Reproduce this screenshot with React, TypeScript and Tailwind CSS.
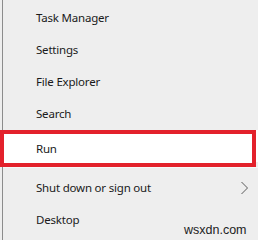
import React from "react";

const font = { fontFamily: '"Noto Sans", "Open Sans", sans-serif' };

function Row({ label, chevron }: { label: string; chevron?: boolean }) {
  return (
    <div className="h-[32px] flex items-center pl-[33px] pr-[8px] text-[11.5px] tracking-[-0.2px] text-[#1a1a1a]">
      <span className="flex-1">{label}</span>
      {chevron && (
        <svg width="9" height="14" viewBox="0 0 9 14" className="mr-[1px]">
          <polyline points="1.5,1 7.5,7 1.5,13" fill="none" stroke="#5a5a5a" strokeWidth="1" />
        </svg>
      )}
    </div>
  );
}

export default function App() {
  return (
    <div className="relative w-[258px] h-[240px] bg-[#eeeeee] overflow-hidden flex" style={font}>
      <div className="w-[2px] shrink-0" />
      <div className="w-[1px] shrink-0 bg-[#8c8c8c]" />
      <div className="flex-1 flex flex-col pt-[2px]">
        <Row label="Task Manager" />
        <Row label="Settings" />
        <Row label="File Explorer" />
        <Row label="Search" />
        <div className="h-[32px] bg-white" />
        <div className="h-[10px] flex flex-col">
          <div className="h-[5px]" />
          <div className="h-[1px] bg-[#f8f8f8]" />
        </div>
        <Row label="Shut down or sign out" chevron />
        <Row label="Desktop" />
      </div>
      <div className="absolute left-0 top-[130px] w-[256px] h-[37px] border-[4px] border-[#e3212b] bg-white flex items-center pl-[32px] text-[11.5px] tracking-[-0.2px] text-[#1a1a1a]">
        Run
      </div>
      <div
        className="absolute left-[184px] top-[222px] text-[12.5px] leading-[16px] text-[#222222]"
        style={{ fontFamily: '"Liberation Sans", Arial, sans-serif' }}
      >
        wsxdn.com
      </div>
    </div>
  );
}
